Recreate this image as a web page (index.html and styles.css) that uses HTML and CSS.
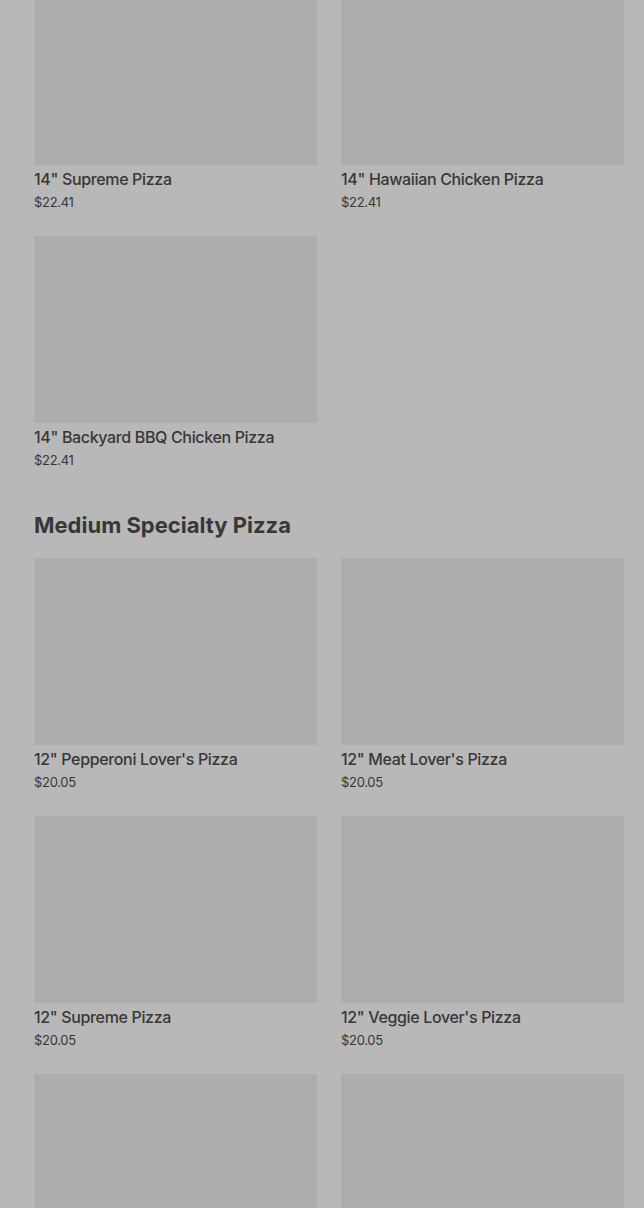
FILE: index.html
```html
<!DOCTYPE html>
<html>
<head>
<meta charset="utf-8">
<link rel="stylesheet" href="styles.css">
</head>
<body>
<div class="page">
  <section class="section first">
    <div class="grid">
      <div class="item"><div class="img"></div><div class="title">14" Supreme Pizza</div><div class="price">$22.41</div></div>
      <div class="item"><div class="img"></div><div class="title">14" Hawaiian Chicken Pizza</div><div class="price">$22.41</div></div>
      <div class="item"><div class="img"></div><div class="title">14" Backyard BBQ Chicken Pizza</div><div class="price">$22.41</div></div>
    </div>
  </section>
  <section class="section">
    <h2 class="heading">Medium Specialty Pizza</h2>
    <div class="grid">
      <div class="item"><div class="img"></div><div class="title">12" Pepperoni Lover's Pizza</div><div class="price">$20.05</div></div>
      <div class="item"><div class="img"></div><div class="title">12" Meat Lover's Pizza</div><div class="price">$20.05</div></div>
      <div class="item"><div class="img"></div><div class="title">12" Supreme Pizza</div><div class="price">$20.05</div></div>
      <div class="item"><div class="img"></div><div class="title">12" Veggie Lover's Pizza</div><div class="price">$20.05</div></div>
      <div class="item"><div class="img"></div></div>
      <div class="item"><div class="img"></div></div>
    </div>
  </section>
</div>
</body>
</html>
```
FILE: styles.css
```css
html, body {
  margin: 0;
  padding: 0;
  background: #b8b8b8;
  overflow: hidden;
  height: 1208px;
}
.page {
  padding: 0 20px 0 34px;
  font-family: Inter, "Noto Sans", sans-serif;
  color: #373737;
}
.section.first {
  margin-top: -22px;
}
.grid {
  display: grid;
  grid-template-columns: 283px 283px;
  column-gap: 24px;
  row-gap: 23px;
}
.img {
  height: 187px;
  background: #adadad;
}
.title {
  margin-top: 2px;
  font-size: 16px;
  line-height: 24px;
  font-weight: 500;
  letter-spacing: -0.35px;
}
.price {
  font-size: 13px;
  line-height: 22px;
  font-weight: 400;
  letter-spacing: -0.3px;
}
.heading {
  margin: 40px 0 19px;
  font-size: 22px;
  line-height: 28px;
  font-weight: 700;
  letter-spacing: 0;
}
```
